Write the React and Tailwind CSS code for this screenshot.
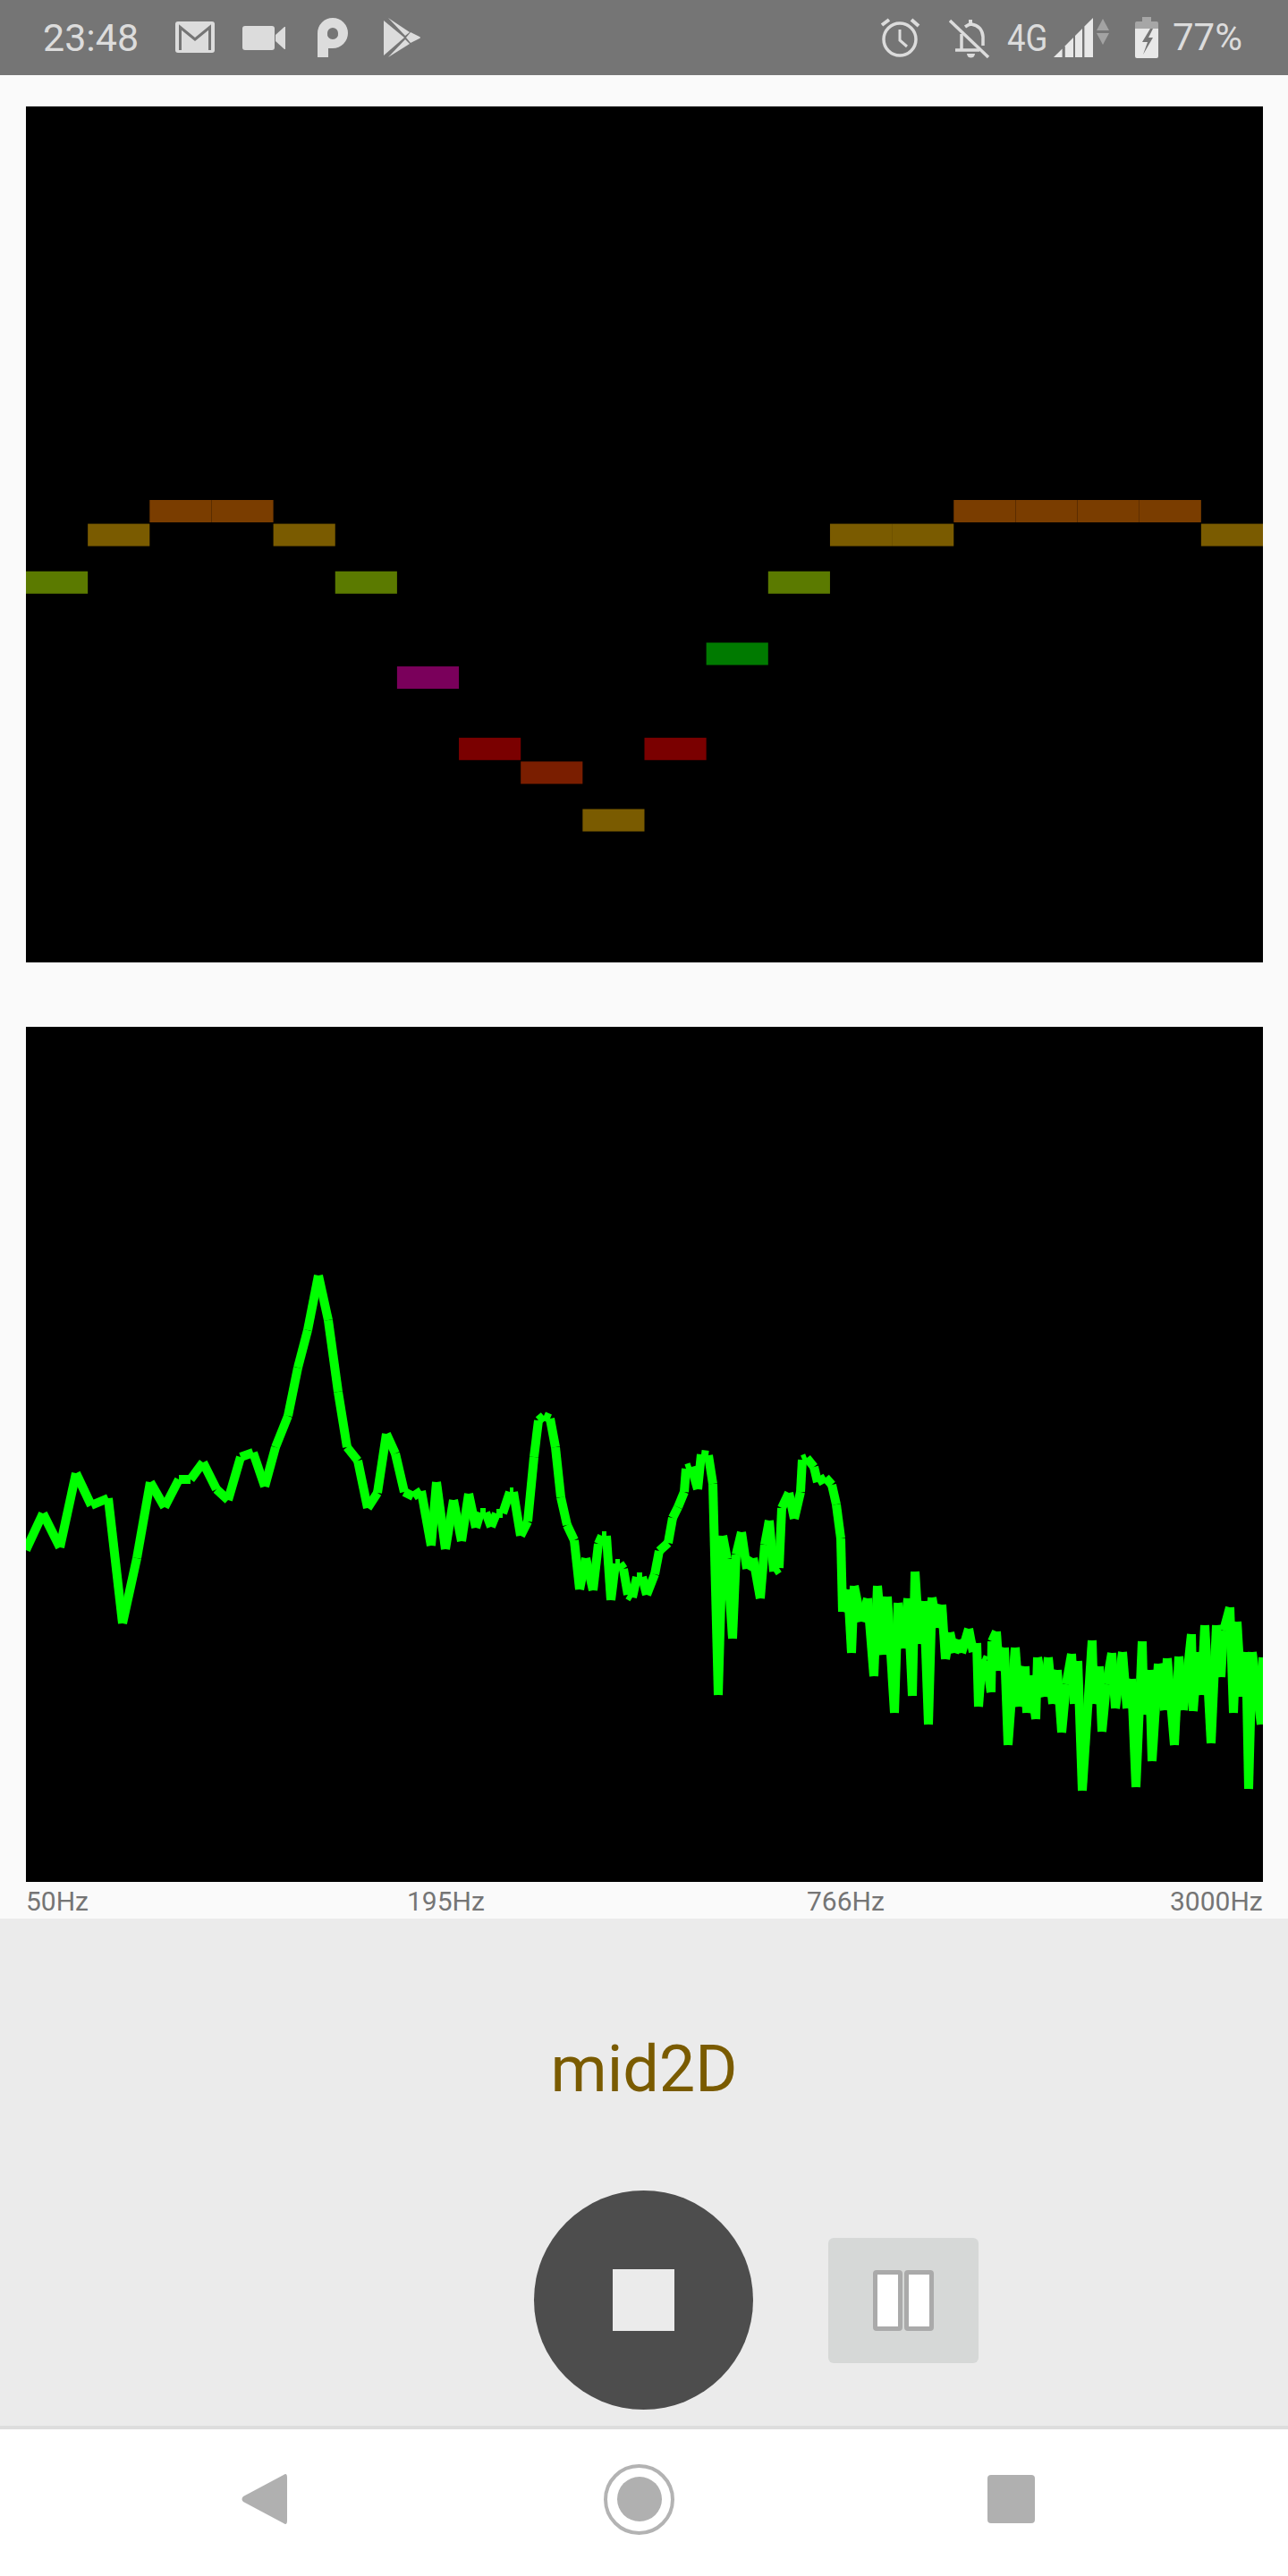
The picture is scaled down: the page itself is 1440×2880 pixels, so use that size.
const NOTE_W = 69.15;
const NOTE_H = 25;
const ROW = 26.58;

const BROWN = '#7a3d00';
const GOLD = '#7a5b00';
const OLIVE = '#5b7a00';

// [column, row below the top row, colour]
const notes = [
  [0, 3, OLIVE],
  [1, 1, GOLD],
  [2, 0, BROWN],
  [3, 0, BROWN],
  [4, 1, GOLD],
  [5, 3, OLIVE],
  [6, 7, '#7a005b'],
  [7, 10, '#7a0000'],
  [8, 11, '#7a1e00'],
  [9, 13, GOLD],
  [10, 10, '#7a0000'],
  [11, 6, '#007a00'],
  [12, 3, OLIVE],
  [13, 1, GOLD],
  [14, 1, GOLD],
  [15, 0, BROWN],
  [16, 0, BROWN],
  [17, 0, BROWN],
  [18, 0, BROWN],
  [19, 1, GOLD],
];

// page coordinates of the spectrum line
const spectrum = [
  [29, 1733], [48, 1692], [67, 1730], [85, 1647], [102, 1683], [121, 1675], [137, 1815], [153, 1742],
  [168, 1657], [184, 1685], [200, 1654], [213, 1654], [227, 1635], [242, 1665], [255, 1677], [269, 1629],
  [283, 1624], [296, 1662], [308, 1618], [322, 1583], [333, 1529], [344, 1487], [356, 1426], [367, 1476],
  [378, 1556], [388, 1618], [400, 1633], [411, 1686], [422, 1669], [432, 1603], [442, 1625], [452, 1668],
  [462, 1673], [471, 1667], [482, 1728], [488, 1657], [498, 1732], [507, 1677], [516, 1723], [524, 1670],
  [532, 1708], [537, 1691], [543, 1691], [549, 1707], [555, 1692], [562, 1692], [570, 1668], [574, 1668],
  [582, 1717], [590, 1701], [597, 1629], [602, 1588], [608, 1583], [615, 1586], [621, 1618], [627, 1674],
  [634, 1705], [642, 1722], [648, 1777], [655, 1742], [663, 1778], [669, 1726], [673, 1717], [678, 1717],
  [683, 1789], [688, 1748], [693, 1748], [697, 1754], [702, 1783], [707, 1786], [712, 1763], [718, 1763],
  [723, 1783], [732, 1760], [737, 1734], [747, 1725], [752, 1697], [758, 1685], [765, 1668], [767, 1642],
  [773, 1640], [780, 1665], [784, 1626], [792, 1627], [797, 1659], [803, 1895], [808, 1717], [813, 1743],
  [819, 1832], [823, 1738], [829, 1713], [835, 1754], [842, 1742], [850, 1787], [855, 1727], [860, 1700],
  [865, 1757], [871, 1753], [874, 1686], [882, 1669], [888, 1698], [895, 1668], [897, 1632], [902, 1630],
  [910, 1640], [914, 1657], [923, 1652], [930, 1660], [935, 1682], [940, 1720], [942, 1802], [948, 1777],
  [952, 1848], [955, 1773], [963, 1813], [970, 1787], [977, 1874], [981, 1773], [988, 1850], [992, 1785],
  [1000, 1915], [1004, 1792], [1010, 1843], [1015, 1787], [1020, 1896], [1023, 1757], [1028, 1838], [1033, 1790],
  [1038, 1928], [1042, 1786], [1048, 1820], [1053, 1794], [1057, 1855], [1062, 1825], [1067, 1848], [1072, 1833],
  [1075, 1848], [1083, 1821], [1088, 1847], [1092, 1837], [1094, 1908], [1098, 1855], [1103, 1857], [1108, 1892],
  [1109, 1835], [1114, 1824], [1117, 1868], [1123, 1842], [1127, 1951], [1135, 1842], [1140, 1908], [1146, 1863],
  [1148, 1915], [1152, 1873], [1158, 1922], [1160, 1853], [1168, 1897], [1172, 1853], [1177, 1905], [1182, 1867],
  [1187, 1937], [1192, 1883], [1198, 1849], [1201, 1905], [1205, 1857], [1210, 2002], [1221, 1834], [1223, 1905],
  [1229, 1863], [1232, 1936], [1237, 1883], [1243, 1848], [1247, 1910], [1255, 1847], [1260, 1910], [1265, 1877],
  [1270, 1998], [1277, 1835], [1279, 1917], [1285, 1867], [1288, 1969], [1295, 1860], [1302, 1912], [1305, 1854],
  [1313, 1951], [1318, 1852], [1323, 1912], [1332, 1827], [1334, 1913], [1339, 1847], [1343, 1895], [1347, 1817],
  [1354, 1949], [1360, 1817], [1365, 1875], [1368, 1823], [1375, 1797], [1379, 1915], [1383, 1813], [1388, 1897],
  [1393, 1847], [1396, 2000], [1400, 1847], [1410, 1928], [1412, 1853],
];

function PianoRoll() {
  return (
    <svg viewBox="0 0 1383 957" className="block w-[1383px] h-[957px] bg-black">
      {notes.map(([col, row, color]) => (
        <rect key={col} x={col * NOTE_W} y={440 + row * ROW} width={NOTE_W} height={NOTE_H} fill={color} />
      ))}
    </svg>
  );
}

function Spectrum() {
  return (
    <svg viewBox="29 1148 1383 956" className="block w-[1383px] h-[956px] bg-black">
      {spectrum.slice(1).map(([x, y], i) => (
        <line key={x} x1={spectrum[i][0]} y1={spectrum[i][1]} x2={x} y2={y} stroke="#00ff00" strokeWidth="10" />
      ))}
    </svg>
  );
}

function GmailIcon() {
  return (
    <svg viewBox="0 0 44 35" className="w-[44px] h-[35px] mt-[-1px]">
      <rect width="44" height="35" rx="3" fill="#dcdcdc" />
      <path d="M5.5 32V6.5L22 20 38.5 6.5V32" fill="none" stroke="#757575" strokeWidth="3" />
    </svg>
  );
}

function VideoIcon() {
  return (
    <svg viewBox="0 0 48 27" className="w-[48px] h-[27px] ml-[31px]">
      <rect width="36" height="27" rx="3" fill="#dcdcdc" />
      <path d="M37 10 47 1h1v25h-1L37 17z" fill="#dcdcdc" />
    </svg>
  );
}

function ParkIcon() {
  return (
    <svg viewBox="0 0 34 44" className="w-[34px] h-[44px] ml-[36px]">
      <path
        fillRule="evenodd"
        d="M0 44V17A17 17 0 1 1 17 34H12V44ZM17 11A6 6 0 0 0 11 17 6 6 0 0 0 17 24 6 6 0 0 0 23 17 6 6 0 0 0 17 11Z"
        fill="#dcdcdc"
      />
    </svg>
  );
}

function PlayIcon() {
  return (
    <svg viewBox="0 0 42 44" className="w-[42px] h-[44px] ml-[40px]" fill="#dcdcdc">
      <path d="M0 3 23 22 0 42z" />
      <path d="M5 0 29 16 24 20z" />
      <path d="M30 16 40 21Q42 22 40 23L30 28 25 22z" />
      <path d="M24 24 29 29 5 44z" />
    </svg>
  );
}

function AlarmIcon() {
  return (
    <svg viewBox="0 0 45 44" className="w-[45px] h-[44px]" fill="none" stroke="#dcdcdc" strokeWidth="3.5">
      <circle cx="22" cy="24" r="18" />
      <path d="M22 13V25L30 32" strokeWidth="3" />
      <path d="M2 8 10 2M35 2 43 9" strokeWidth="4" />
    </svg>
  );
}

function BellOffIcon() {
  return (
    <svg viewBox="0 0 46 46" className="w-[46px] h-[46px] ml-[32px] mt-[2px]" fill="none" stroke="#dcdcdc" strokeWidth="3.5">
      <path d="M1 3 44 44" />
      <path d="M14 18V36M7 36H34" />
      <path d="M18 10Q22 7 25 7 37 9 38 21V31" />
      <path d="M22 2h4v5h-4z" fill="#dcdcdc" stroke="none" />
      <path d="M20 40h9a4.5 4.5 0 0 1-9 0z" fill="#dcdcdc" stroke="none" />
    </svg>
  );
}

function SignalIcon() {
  return (
    <svg viewBox="0 0 44 44" className="w-[44px] h-[44px] ml-[8px]" fill="#e8e8e8">
      <path d="M0 44 9.6 34.4V44z" />
      <path d="M12.8 31.2 22 22V44H12.8z" />
      <path d="M24 20 32 12V44H24z" />
      <path d="M34.4 9.6 44 0V44H34.4z" />
    </svg>
  );
}

function ArrowsIcon() {
  return (
    <svg viewBox="0 0 14 29" className="w-[14px] h-[29px] ml-[4px] mt-[-14px]" fill="#a3a3a3">
      <path d="M7 0 14 13H0z" />
      <path d="M0 16H14L7 29z" />
    </svg>
  );
}

function BatteryIcon() {
  return (
    <svg viewBox="0 0 26 46" className="w-[26px] h-[46px] ml-[29px]">
      <path d="M8 0H18V5H24Q26 5 26 7V13H0V7Q0 5 2 5H8z" fill="#a6a6a6" />
      <path d="M0 13H26V44Q26 46 24 46H2Q0 46 0 44z" fill="#e8e8e8" />
      <path d="M17 13 8 28H14L9 42 20 23H15L20 13z" fill="#757575" />
    </svg>
  );
}

function StatusBar() {
  return (
    <div className="flex items-center h-[84px] pl-[48px] bg-[#757575] text-[#dcdcdc] text-[43px] leading-none">
      <span className="w-[106px] mr-[42px]">23:48</span>
      <GmailIcon />
      <VideoIcon />
      <ParkIcon />
      <PlayIcon />
      <div className="ml-[513px] flex items-center">
        <AlarmIcon />
        <BellOffIcon />
        <span className="w-[44px] ml-[19px] origin-left scale-x-[0.85] whitespace-nowrap">4G</span>
        <SignalIcon />
        <ArrowsIcon />
        <BatteryIcon />
        <span className="ml-[16px] text-[42px]">77%</span>
      </div>
    </div>
  );
}

function Controls() {
  return (
    <div className="flex-1 bg-[#ebebeb] flex flex-col items-center pt-[134px]">
      <div className="text-[72px] leading-[70px] text-[#7a5b00]">mid2D</div>
      <div className="mt-[100px] w-full grid grid-cols-[597px_245px_1fr] items-center">
        <div />
        <button className="w-[245px] h-[245px] rounded-full bg-[#4d4d4d] flex items-center justify-center">
          <span className="block w-[69px] h-[69px] bg-[#ebebeb]" />
        </button>
        <button className="ml-[84px] w-[168px] h-[140px] rounded-md bg-[#d6d8d7] flex items-center justify-center gap-[2px]">
          <span className="block w-[33px] h-[68px] rounded bg-white border-[5px] border-[#aaaaaa]" />
          <span className="block w-[33px] h-[68px] rounded bg-white border-[5px] border-[#aaaaaa]" />
        </button>
      </div>
    </div>
  );
}

function NavBar() {
  return (
    <div className="h-[168px] border-t-4 border-[#dddddd] bg-white flex items-center pl-[270px] pb-[8px]">
      <svg viewBox="0 0 51 56" className="w-[51px] h-[56px]">
        <path d="M47 1Q51-2 51 4V52Q51 58 47 55L2 31Q-1 28 2 25z" fill="#b0b0b0" />
      </svg>
      <div className="ml-[354px] w-[79px] h-[79px] rounded-full border-4 border-[#b3b3b3] flex items-center justify-center">
        <span className="block w-[50px] h-[50px] rounded-full bg-[#b0b0b0]" />
      </div>
      <div className="ml-[350px] w-[53px] h-[54px] rounded bg-[#b0b0b0]" />
    </div>
  );
}

export default function App() {
  return (
    <div className="w-[1440px] h-[2880px] flex flex-col bg-[#fafafa] font-['Roboto',sans-serif]">
      <StatusBar />
      <div className="px-[29px] pt-[35px]">
        <PianoRoll />
        <div className="mt-[72px]">
          <Spectrum />
        </div>
        <div className="h-[41px] pt-[2px] grid grid-cols-[426px_447px_406px_1fr] items-center text-[30px] leading-none text-[#757575]">
          <span>50Hz</span>
          <span>195Hz</span>
          <span>766Hz</span>
          <span className="text-right">3000Hz</span>
        </div>
      </div>
      <Controls />
      <NavBar />
    </div>
  );
}
